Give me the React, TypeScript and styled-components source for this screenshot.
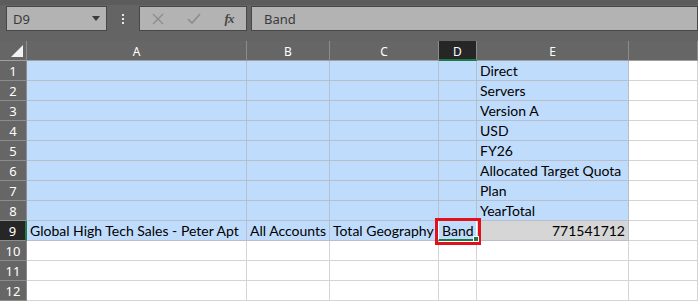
import React from "react";
import styled, { createGlobalStyle } from "styled-components";

const GlobalStyle = createGlobalStyle`
  html, body {
    margin: 0;
    padding: 0;
    background: #ffffff;
    overflow: hidden;
  }
`;

const Page = styled.div`
  width: 698px;
  height: 303px;
  background: #ffffff;
  font-family: Lato, "Liberation Sans", sans-serif;
`;

// Formula bar
const Toolbar = styled.div`
  height: 41px;
  box-sizing: border-box;
  background: #646464;
  border-top: 5px solid #5c5c5c;
  padding: 1px 0 0 6px;
  display: flex;
  align-items: flex-start;
`;

const Box = styled.div<{ w?: number }>`
  height: 25px;
  box-sizing: border-box;
  background: #b3b3b3;
  border: 1px solid #474747;
  display: flex;
  align-items: center;
  ${({ w }) => (w ? `width: ${w}px;` : "flex: 1;")}
`;

const NameText = styled.span`
  flex: 1;
  padding-left: 6px;
  font-family: "Noto Sans", "Open Sans", sans-serif;
  font-size: 13px;
  color: #3a3a3a;
`;

const Dots = styled.div`
  width: 32px;
  height: 25px;
  display: flex;
  flex-direction: column;
  align-items: center;
  justify-content: center;
  gap: 2px;
  span {
    width: 2px;
    height: 2px;
    background: #e8e8e8;
  }
`;

const IconSlot = styled.div<{ w: number }>`
  width: ${({ w }) => w}px;
  display: flex;
  align-items: center;
  justify-content: center;
`;

const Fx = styled.span`
  font-family: "Liberation Serif", serif;
  font-style: italic;
  font-weight: bold;
  font-size: 13px;
  color: #474747;
  letter-spacing: -1px;
`;

const FormulaText = styled.span`
  padding-left: 12px;
  font-family: "Noto Sans", "Open Sans", sans-serif;
  font-size: 13px;
  color: #3a3a3a;
`;

const Gap = styled.div`
  width: 4px;
`;

// Grid
const Sheet = styled.div`
  display: grid;
  grid-template-columns: 27px 220px 83px 109px 38px 152px 1fr;
  grid-auto-rows: 20px;
`;

const Corner = styled.div`
  background: #666666;
  border-right: 1px solid #8c8c8c;
  border-bottom: 1px solid #a0a0a0;
  position: relative;
  &::after {
    content: "";
    position: absolute;
    right: 3px;
    bottom: 3px;
    border-left: 12px solid transparent;
    border-bottom: 12px solid #f2f2f2;
  }
`;

const ColHead = styled.div<{ active?: boolean }>`
  background: ${({ active }) => (active ? "#262626" : "#666666")};
  border-right: 1px solid #8c8c8c;
  border-bottom: ${({ active }) => (active ? "2px solid #1f7a4a" : "1px solid #a0a0a0")};
  box-sizing: border-box;
  color: #ffffff;
  font-family: "Noto Sans", "Open Sans", sans-serif;
  font-size: 12px;
  display: flex;
  align-items: center;
  justify-content: center;
  padding-top: 2px;
`;

const RowHead = styled.div<{ active?: boolean }>`
  background: ${({ active }) => (active ? "#262626" : "#666666")};
  border-bottom: 1px solid #8c8c8c;
  border-right: ${({ active }) => (active ? "2px solid #1f7a4a" : "1px solid #8c8c8c")};
  box-sizing: border-box;
  color: #ffffff;
  font-family: "Noto Sans", "Open Sans", sans-serif;
  font-size: 13px;
  display: flex;
  align-items: center;
  justify-content: center;
`;

const Cell = styled.div<{ fill: "sel" | "gray" | "none"; right?: boolean }>`
  background: ${({ fill }) =>
    fill === "sel" ? "#c0dcfc" : fill === "gray" ? "#d6d6d6" : "#ffffff"};
  border-right: 1px solid ${({ fill }) => (fill === "none" ? "#d4d4d4" : "#b8bfc8")};
  border-bottom: 1px solid ${({ fill }) => (fill === "none" ? "#d4d4d4" : "#b8bfc8")};
  box-sizing: border-box;
  font-size: 14px;
  color: #000000;
  white-space: nowrap;
  display: flex;
  align-items: flex-end;
  justify-content: ${({ right }) => (right ? "flex-end" : "flex-start")};
  padding: 0 3px 0 3px;
  line-height: 18px;
  position: relative;
`;

const ActiveFrame = styled.span`
  position: absolute;
  z-index: 5;
  left: -1px;
  top: -1px;
  right: -1px;
  bottom: -1px;
  border: 1px solid #ffffff;
  border-bottom: 2px solid #1f7a4a;
  &::before {
    content: "";
    position: absolute;
    left: -4px;
    top: -3px;
    right: -5px;
    bottom: -6px;
    border: 3px solid #e0111b;
  }
  &::after {
    content: "";
    position: absolute;
    right: -3px;
    bottom: -3px;
    width: 4px;
    height: 4px;
    background: #1f7a4a;
    border: 1px solid #ffffff;
  }
`;

const cols = ["A", "B", "C", "D", "E"];

const data: Record<number, string[]> = {
  1: ["", "", "", "", "Direct"],
  2: ["", "", "", "", "Servers"],
  3: ["", "", "", "", "Version A"],
  4: ["", "", "", "", "USD"],
  5: ["", "", "", "", "FY26"],
  6: ["", "", "", "", "Allocated Target Quota"],
  7: ["", "", "", "", "Plan"],
  8: ["", "", "", "", "YearTotal"],
  9: ["Global High Tech Sales - Peter Apt", "All Accounts", "Total Geography", "Band", "771541712"],
};

const IconX = () => (
  <svg width="12" height="12" viewBox="0 0 12 12">
    <path d="M1 1 L11 11 M11 1 L1 11" stroke="#8c8c8c" strokeWidth="1.3" fill="none" />
  </svg>
);

const IconCheck = () => (
  <svg width="14" height="12" viewBox="0 0 14 12">
    <path d="M1 6 L5 10 L13 1" stroke="#8c8c8c" strokeWidth="1.6" fill="none" />
  </svg>
);

const Caret = () => (
  <svg width="8" height="5" viewBox="0 0 8 5">
    <path d="M0 0 H8 L4 5 Z" fill="#3a3a3a" />
  </svg>
);

export default function App() {
  const rows = Array.from({ length: 12 }, (_, i) => i + 1);
  return (
    <Page>
      <GlobalStyle />
      <Toolbar>
        <Box w={101}>
          <NameText>D9</NameText>
          <IconSlot w={20}>
            <Caret />
          </IconSlot>
        </Box>
        <Dots>
          <span />
          <span />
          <span />
        </Dots>
        <Box w={108}>
          <IconSlot w={36}>
            <IconX />
          </IconSlot>
          <IconSlot w={36}>
            <IconCheck />
          </IconSlot>
          <IconSlot w={34}>
            <Fx>fx</Fx>
          </IconSlot>
        </Box>
        <Gap />
        <Box>
          <FormulaText>Band</FormulaText>
        </Box>
      </Toolbar>
      <Sheet>
        <Corner />
        {cols.map((c) => (
          <ColHead key={c} active={c === "D"}>
            {c}
          </ColHead>
        ))}
        <ColHead />
        {rows.map((r) => (
          <React.Fragment key={r}>
            <RowHead active={r === 9}>{r}</RowHead>
            {cols.map((c, ci) => {
              const text = data[r]?.[ci] ?? "";
              const isE9 = r === 9 && c === "E";
              const fill = r <= 9 ? (isE9 ? "gray" : "sel") : "none";
              return (
                <Cell key={c} fill={fill} right={isE9}>
                  {text}
                  {r === 9 && c === "D" && <ActiveFrame />}
                </Cell>
              );
            })}
            <Cell fill="none" />
          </React.Fragment>
        ))}
      </Sheet>
    </Page>
  );
}
